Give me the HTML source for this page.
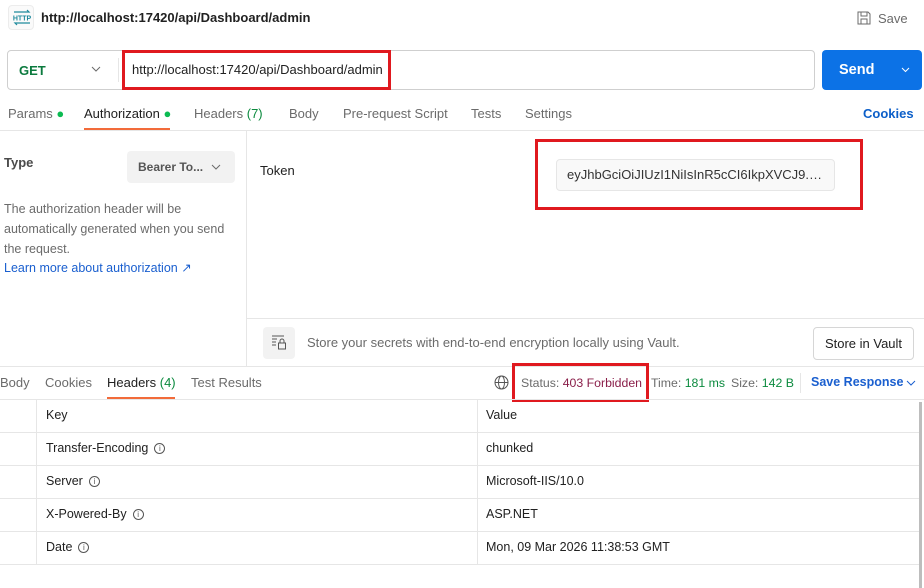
<!DOCTYPE html>
<html><head><meta charset="utf-8"><style>
*{margin:0;padding:0;box-sizing:border-box}
body{width:924px;height:588px;background:#fff;font-family:"Liberation Sans",sans-serif;font-size:13px;color:#212121;position:relative;overflow:hidden}
.a{position:absolute;white-space:nowrap}
.g{color:#6b6b6b}
.hl{position:absolute;height:1px;background:#e6e6e6}
.vl{position:absolute;width:1px;background:#e6e6e6}
.red{position:absolute;border:3px solid #e0191f}
.t{font-size:12.5px}
.i{display:inline-block;width:11px;height:11px;border:1px solid #555;border-radius:50%;font-size:8px;line-height:9px;text-align:center;vertical-align:middle;margin-left:6px;color:#555}
</style></head><body>
<div class="a" style="left:8px;top:5px;width:26px;height:25px;border:1px solid #ececec;border-radius:4px;background:#fafafa"></div>
<svg class="a" style="left:12px;top:9px" width="20" height="17" viewBox="0 0 20 17"><path d="M2 3h15l-2-2M18 14H3l2 2" stroke="#1f8a9c" stroke-width="1.2" fill="none"/><text x="10" y="11.5" font-size="7" font-family="Liberation Sans" fill="#1f8a9c" text-anchor="middle" font-weight="bold">HTTP</text></svg>
<div class="a" style="left:41px;top:10px;font-weight:bold;font-size:13px">http://localhost:17420/api/Dashboard/admin</div>
<svg class="a" style="left:857px;top:11px" width="14" height="14" viewBox="0 0 14 14"><path d="M1 1h10l2 2v10H1z M4 1v4h6V1 M4 13V8h6v5" stroke="#6b6b6b" fill="none"/></svg>
<div class="a g" style="left:878px;top:11px">Save</div>
<div class="a" style="left:7px;top:50px;width:808px;height:40px;border:1px solid #cfcfcf;border-radius:4px"></div>
<div class="a" style="left:19px;top:63px;color:#0b7a3e;font-weight:bold">GET</div>
<svg class="a" style="left:91px;top:66px" width="10" height="6"><path d="M1 1l4 4 4-4" stroke="#6b6b6b" fill="none"/></svg>
<div class="vl" style="left:118px;top:58px;height:24px"></div>
<div class="a" style="left:132px;top:62px">http://localhost:17420/api/Dashboard/admin</div>
<div class="red" style="left:122px;top:50px;width:269px;height:40px"></div>
<div class="a" style="left:822px;top:50px;width:100px;height:40px;background:#0c72e6;border-radius:4px"></div>
<div class="a" style="left:839px;top:62px;color:#fff;font-weight:bold;font-size:14.5px">Send</div>
<svg class="a" style="left:901px;top:67px" width="9" height="6"><path d="M1 1l3.5 3.5L8 1" stroke="#fff" fill="none"/></svg>
<div class="a g" style="left:8px;top:106px">Params <span style="color:#0cbb52">●</span></div>
<div class="a" style="left:84px;top:106px">Authorization <span style="color:#0cbb52">●</span></div>
<div class="a" style="left:84px;top:128px;width:86px;height:2px;background:#f26b3a"></div>
<div class="a g" style="left:194px;top:106px">Headers <span style="color:#0b8a3e">(7)</span></div>
<div class="a g" style="left:289px;top:106px">Body</div>
<div class="a g" style="left:343px;top:106px">Pre-request Script</div>
<div class="a g" style="left:471px;top:106px">Tests</div>
<div class="a g" style="left:525px;top:106px">Settings</div>
<div class="a" style="left:863px;top:106px;color:#0c5fc9;font-weight:bold">Cookies</div>
<div class="hl" style="left:0;top:130px;width:924px"></div>
<div class="vl" style="left:246px;top:131px;height:235px"></div>
<div class="a" style="left:4px;top:155px;font-weight:bold;color:#4a4a4a">Type</div>
<div class="a" style="left:127px;top:151px;width:108px;height:32px;background:#f2f2f2;border-radius:4px"></div>
<div class="a" style="left:138px;top:160px;font-weight:bold;color:#555;font-size:12px">Bearer To...</div>
<svg class="a" style="left:211px;top:164px" width="10" height="6"><path d="M1 1l4 4 4-4" stroke="#6b6b6b" fill="none"/></svg>
<div class="a g" style="left:4px;top:199px;line-height:20px;font-size:12.5px">The authorization header will be<br>automatically generated when you send<br>the request.</div>
<div class="a" style="left:4px;top:260px;color:#1a5fcf;font-size:12.5px">Learn more about authorization ↗</div>
<div class="a" style="left:260px;top:163px">Token</div>
<div class="a" style="left:556px;top:159px;width:279px;height:32px;background:#f9f9f9;border:1px solid #e6e6e6;border-radius:4px"></div>
<div class="a" style="left:567px;top:167px;width:260px;overflow:hidden;text-overflow:ellipsis;color:#333">eyJhbGciOiJIUzI1NiIsInR5cCI6IkpXVCJ9.eyJhbGciOiJIUzI1</div>
<div class="red" style="left:535px;top:139px;width:328px;height:71px"></div>
<div class="hl" style="left:247px;top:318px;width:677px"></div>
<div class="a" style="left:263px;top:327px;width:32px;height:32px;background:#f2f2f2;border-radius:4px"></div>
<svg class="a" style="left:271px;top:335px" width="16" height="15" viewBox="0 0 16 15"><path d="M1 1h12M1 4h5M1 7h4M1 10h4" stroke="#555"/><rect x="7.5" y="8" width="7" height="6" stroke="#555" fill="none"/><path d="M9 8V6a2 2 0 0 1 4 0v2" stroke="#555" fill="none"/></svg>
<div class="a g" style="left:307px;top:335px">Store your secrets with end-to-end encryption locally using Vault.</div>
<div class="a" style="left:813px;top:327px;width:101px;height:33px;border:1px solid #d6d6d6;border-radius:4px;text-align:center;line-height:31px">Store in Vault</div>
<div class="hl" style="left:0;top:366px;width:924px"></div>
<div class="a g" style="left:0;top:375px">Body</div>
<div class="a g" style="left:45px;top:375px">Cookies</div>
<div class="a" style="left:107px;top:375px">Headers <span style="color:#0b8a3e">(4)</span></div>
<div class="a" style="left:107px;top:397px;width:68px;height:2px;background:#f26b3a"></div>
<div class="a g" style="left:191px;top:375px">Test Results</div>
<svg class="a" style="left:494px;top:375px" width="15" height="15" viewBox="0 0 15 15"><circle cx="7.5" cy="7.5" r="6.5" stroke="#555" fill="none"/><ellipse cx="7.5" cy="7.5" rx="3" ry="6.5" stroke="#555" fill="none"/><path d="M1 7.5h13" stroke="#555"/></svg>
<div class="a g" style="left:521px;top:376px;font-size:12.3px">Status: <span style="color:#8a1f4a">403 Forbidden</span></div>
<div class="red" style="left:512px;top:363px;width:137px;height:39px"></div>
<div class="a g" style="left:651px;top:376px;font-size:12.3px">Time: <span style="color:#0b8a3e">181 ms</span></div>
<div class="a g" style="left:731px;top:376px;font-size:12.3px">Size: <span style="color:#0b8a3e">142 B</span></div>
<div class="vl" style="left:800px;top:373px;height:20px"></div>
<div class="a" style="left:811px;top:375px;color:#1a5fcf;font-weight:bold;font-size:12.5px">Save Response</div>
<svg class="a" style="left:906px;top:380px" width="10" height="6"><path d="M1 1l4 4 4-4" stroke="#1a5fcf" fill="none"/></svg>
<div class="hl" style="left:0;top:399px;width:924px"></div>
<div class="vl" style="left:36px;top:400px;height:164px"></div>
<div class="vl" style="left:477px;top:400px;height:164px"></div>
<div class="hl" style="left:0;top:432px;width:920px"></div>
<div class="hl" style="left:0;top:465px;width:920px"></div>
<div class="hl" style="left:0;top:498px;width:920px"></div>
<div class="hl" style="left:0;top:531px;width:920px"></div>
<div class="hl" style="left:0;top:564px;width:920px"></div>
<div class="a" style="left:919px;top:402px;width:3px;height:186px;background:#bdbdbd"></div>
<div class="a t" style="left:46px;top:408px">Key</div>
<div class="a t" style="left:486px;top:408px">Value</div>
<div class="a t" style="left:46px;top:441px">Transfer-Encoding<span class="i">i</span></div>
<div class="a t" style="left:486px;top:441px">chunked</div>
<div class="a t" style="left:46px;top:474px">Server<span class="i">i</span></div>
<div class="a t" style="left:486px;top:474px">Microsoft-IIS/10.0</div>
<div class="a t" style="left:46px;top:507px">X-Powered-By<span class="i">i</span></div>
<div class="a t" style="left:486px;top:507px">ASP.NET</div>
<div class="a t" style="left:46px;top:540px">Date<span class="i">i</span></div>
<div class="a t" style="left:486px;top:540px">Mon, 09 Mar 2026 11:38:53 GMT</div>
</body></html>
